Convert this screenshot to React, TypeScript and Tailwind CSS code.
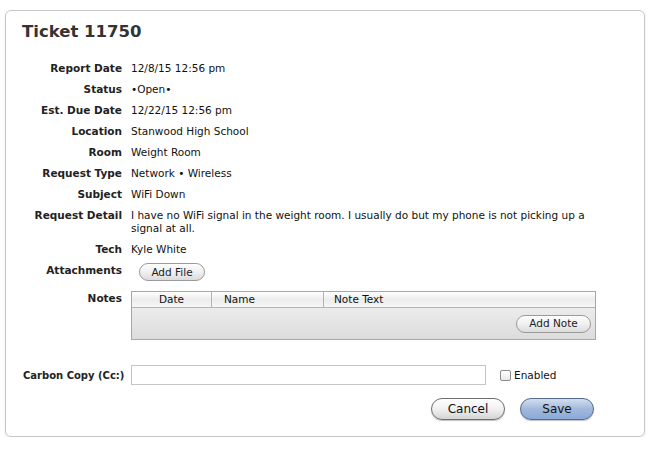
const rows: [string, string][] = [
  ["Report Date", "12/8/15 12:56 pm"],
  ["Status", "\u2022Open\u2022"],
  ["Est. Due Date", "12/22/15 12:56 pm"],
  ["Location", "Stanwood High School"],
  ["Room", "Weight Room"],
  ["Request Type", "Network \u2022 Wireless"],
  ["Subject", "WiFi Down"],
  [
    "Request Detail",
    "I have no WiFi signal in the weight room. I usually do but my phone is not picking up a signal at all.",
  ],
  ["Tech", "Kyle White"],
];

function PillButton({ children, className = "" }: { children: React.ReactNode; className?: string }) {
  return (
    <button
      className={
        "rounded-full border border-[#9a9a9a] bg-gradient-to-b from-[#fdfdfd] via-[#f0f0f0] to-[#dcdcdc] text-[10.5px] leading-none text-[#222] shadow-[inset_0_1px_0_#fff] " +
        className
      }
    >
      {children}
    </button>
  );
}

export default function App() {
  return (
    <div className="pl-[5px] pt-[10px] font-['DejaVu_Sans',sans-serif] text-[10.5px] leading-[13px] text-[#111]">
      <div className="w-[640px] h-[427px] rounded-[6px] border border-[#c6c6c6] bg-white shadow-[0_2px_3px_rgba(0,0,0,0.08)] pl-[16px] pt-[10px]">
        <h1 className="text-[16.5px] leading-[22px] font-bold text-[#333]">Ticket 11750</h1>

        <div className="mt-[19px] grid grid-cols-[100px_465px] gap-x-[9px] gap-y-[8px]">
          {rows.map(([label, value]) => (
            <div key={label} className="contents">
              <div className="text-right font-bold text-[#222]">{label}</div>
              <div>{value}</div>
            </div>
          ))}
          <div className="text-right font-bold text-[#222]">Attachments</div>
          <div className="pl-[8px] -mt-[1px]">
            <PillButton className="w-[66px] h-[18px]">Add File</PillButton>
          </div>
          <div className="text-right font-bold text-[#222] mt-[3px]">Notes</div>
          <div className="mt-[2px] border border-[#a8a8a8]">
            <div className="flex h-[16px] border-b border-[#b4b4b4] bg-gradient-to-b from-[#ffffff] via-[#ececec] to-[#f6f6f6] leading-[15px]">
              <div className="w-[80px] border-r border-[#b4b4b4] text-center">Date</div>
              <div className="w-[112px] border-r border-[#b4b4b4] pl-[12px]">Name</div>
              <div className="pl-[10px]">Note Text</div>
            </div>
            <div className="flex h-[31px] items-center justify-end bg-gradient-to-b from-[#ececec] to-[#dcdcdc] pr-[4px]">
              <PillButton className="w-[75px] h-[18px]">Add Note</PillButton>
            </div>
          </div>
        </div>

        <div className="mt-[25px] flex items-center">
          <div className="w-[109px] shrink-0 whitespace-nowrap pl-[1px] text-[10px] font-bold text-[#222]">
            Carbon Copy (Cc:)
          </div>
          <input className="w-[355px] h-[20px] border border-[#c4c4c4] outline-none" />
          <label className="ml-[14px] flex items-center gap-[3px]">
            <span className="inline-block w-[11px] h-[11px] rounded-[2px] border border-[#8c8c8c] bg-gradient-to-b from-white to-[#e8e8e8]" />
            <span>Enabled</span>
          </label>
        </div>

        <div className="mt-[13px] flex justify-end gap-[15px] pr-[50px]">
          <button className="w-[74px] h-[22px] rounded-full border border-[#6e6e6e] bg-gradient-to-b from-[#ffffff] via-[#f1f1f1] to-[#d4d4d4] text-[12px] text-[#111] shadow-[0_1px_1px_rgba(0,0,0,0.25)]">
            Cancel
          </button>
          <button className="w-[74px] h-[22px] rounded-full border border-[#556a8e] bg-gradient-to-b from-[#d3deee] via-[#a2b9dc] to-[#8aa9d8] text-[12px] text-[#111] shadow-[0_1px_1px_rgba(0,0,0,0.25)]">
            Save
          </button>
        </div>
      </div>
    </div>
  );
}
